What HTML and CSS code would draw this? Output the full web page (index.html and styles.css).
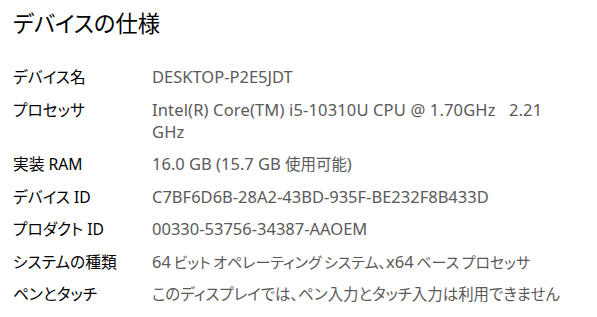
FILE: index.html
```html
<!DOCTYPE html>
<html lang="ja">
<head>
    <meta charset="UTF-8">
    <meta name="viewport" content="width=device-width, initial-scale=1.0">
    <title>デバイスの仕様</title>
    <link rel="stylesheet" href="styles.css">
</head>
<body>
    <div class="specs">
        <h1>デバイスの仕様</h1>
        <div class="spec-list">
            <div class="label">デバイス名</div>
            <div class="value">DESKTOP-P2E5JDT</div>

            <div class="label">プロセッサ</div>
            <div class="value wide">Intel(R) Core(TM) i5-10310U CPU @ 1.70GHz&nbsp;&nbsp;&nbsp;2.21<br>GHz</div>

            <div class="label">実装 RAM</div>
            <div class="value">16.0 GB (15.7 GB <span class="ja">使用可能</span>)</div>

            <div class="label">デバイス ID</div>
            <div class="value">C7BF6D6B-28A2-43BD-935F-BE232F8B433D</div>

            <div class="label">プロダクト ID</div>
            <div class="value">00330-53756-34387-AAOEM</div>

            <div class="label">システムの種類</div>
            <div class="value tight">64 <span class="ja">ビット オペレーティング システム、</span>x64 <span class="ja">ベース プロセッサ</span></div>

            <div class="label">ペンとタッチ</div>
            <div class="value"><span class="ja">このディスプレイでは、ペン入力とタッチ入力は利用できません</span></div>
        </div>
    </div>
</body>
</html>
```

FILE: styles.css
```css
body {
    margin: 0;
    background-color: #fff;
    font-family: "Noto Sans", "Noto Sans CJK JP", sans-serif;
    font-feature-settings: "palt";
    color: #000;
}
.specs {
    padding: 9px 0 0 13px;
}
h1 {
    font-size: 22.3px;
    font-weight: normal;
    line-height: 30px;
    margin: 0 0 27px 0;
}
.spec-list {
    display: grid;
    grid-template-columns: 139px 1fr;
    row-gap: 10.5px;
    font-size: 16.5px;
    line-height: 22px;
}
.label {
    color: #000;
    font-size: 15.7px;
}
.value {
    color: #5a5a5a;
}
.value .ja {
    font-size: 15.45px;
}
.value.wide {
    letter-spacing: 0.15px;
}
.value.tight {
    word-spacing: -1.5px;
}
.value.tight .ja {
    font-size: 15px;
}
```
